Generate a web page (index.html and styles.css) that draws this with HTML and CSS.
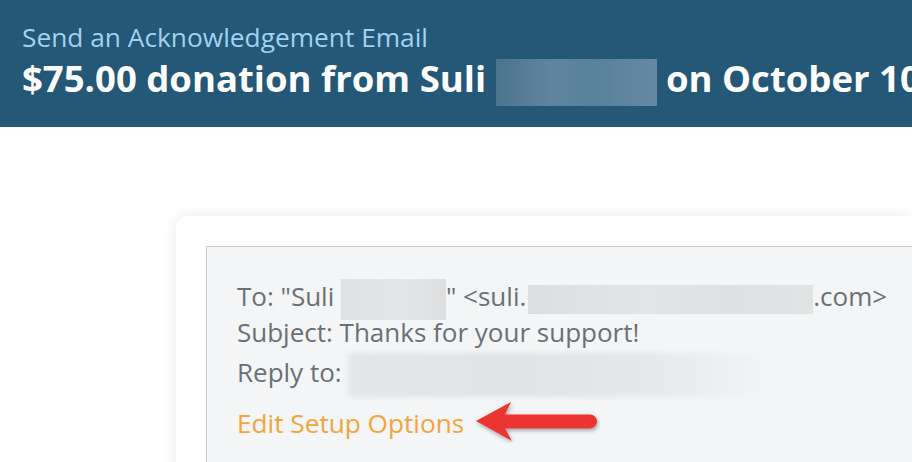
FILE: index.html
```html
<!DOCTYPE html>
<html>
<head>
<meta charset="utf-8">
<link rel="stylesheet" href="styles.css">
</head>
<body>
<header class="hero">
  <div class="hero-sub">Send an Acknowledgement Email</div>
  <h1 class="hero-title">$75.00 donation from Suli <span class="blur blur-title"></span> on October 10</h1>
</header>
<main class="page">
  <section class="card">
    <div class="mail">
      <div class="line">To: "Suli <span class="blur blur-name"></span>" &lt;suli.<span class="blur blur-email"></span>.com&gt;</div>
      <div class="line">Subject: Thanks for your support!</div>
      <div class="line line-reply">Reply to: <span class="blur blur-reply"></span></div>
      <div class="edit-row">
        <a class="edit-link" href="#">Edit Setup Options</a>
        <svg class="arrow" width="126" height="42" viewBox="0 0 126 42">
          <defs>
            <filter id="sh" x="-20%" y="-30%" width="140%" height="160%">
              <feDropShadow dx="1" dy="2" stdDeviation="2" flood-color="#000" flood-opacity="0.35"/>
            </filter>
          </defs>
          <path d="M2 20 L37 1 L31 13.5 L116 13.5 A7 7 0 0 1 116 27.5 L31 27.5 L38 40 Z" fill="#ec3530" filter="url(#sh)"/>
        </svg>
      </div>
    </div>
  </section>
</main>
</body>
</html>
```
FILE: styles.css
```css
html, body {
  margin: 0;
  padding: 0;
  background: #ffffff;
  overflow: hidden;
  height: 462px;
  font-family: "Open Sans", "Liberation Sans", sans-serif;
}
.hero {
  background: #255777;
  height: 127px;
  box-sizing: border-box;
  padding: 20px 0 0 22px;
  white-space: nowrap;
  overflow: hidden;
}
.hero-sub {
  color: #9fd3f3;
  font-size: 26.3px;
  line-height: 34px;
}
.hero-title {
  margin: 0;
  color: #ffffff;
  font-size: 36.5px;
  font-weight: 700;
  line-height: 48px;
}
.blur {
  display: inline-block;
  vertical-align: middle;
}
.blur-title {
  width: 161px;
  height: 47px;
  margin: -8px 0;
  background: linear-gradient(90deg, #4d748f 0%, #5f849e 35%, #58809a 60%, #6589a2 100%);
}
.page {
  padding: 89px 0 0 176px;
  height: 335px;
  overflow: hidden;
}
.card {
  background: #ffffff;
  border-radius: 12px 0 0 0;
  box-shadow: 0 0 14px rgba(0, 0, 0, 0.09);
  padding: 30px 0 0 30px;
  height: 300px;
}
.mail {
  background: #f3f5f7;
  border: 1px solid #c9cdd0;
  border-right: none;
  padding: 31px 0 0 30px;
  height: 300px;
  white-space: nowrap;
  color: #6a7075;
  font-size: 26px;
}
.line {
  line-height: 36px;
  height: 36px;
}
.line-reply {
  line-height: 44px;
  height: 44px;
}
.blur-name {
  width: 105px;
  height: 41px;
  margin: -6px 0;
  background: linear-gradient(90deg, #dfe1e3, #e3e5e7 60%, #dcdee0);
}
.blur-email {
  width: 285px;
  height: 29px;
  margin: -4px 0 -4px 2px;
  background: linear-gradient(90deg, #dcdfe1, #e2e4e6 40%, #dee1e3 70%, #e1e3e5);
}
.blur-reply {
  width: 412px;
  height: 44px;
  margin: -6px 0;
  background: linear-gradient(90deg, #e4e6e8, #e1e3e5 40%, #e6e8ea 75%, #f1f3f5);
  filter: blur(2px);
}
.edit-row {
  display: flex;
  align-items: center;
  margin-top: 11px;
  height: 36px;
}
.edit-link {
  color: #f0a63a;
  text-decoration: none;
  font-size: 26.2px;
  line-height: 36px;
}
.arrow {
  margin-left: 10px;
  margin-top: -2px;
}
```
